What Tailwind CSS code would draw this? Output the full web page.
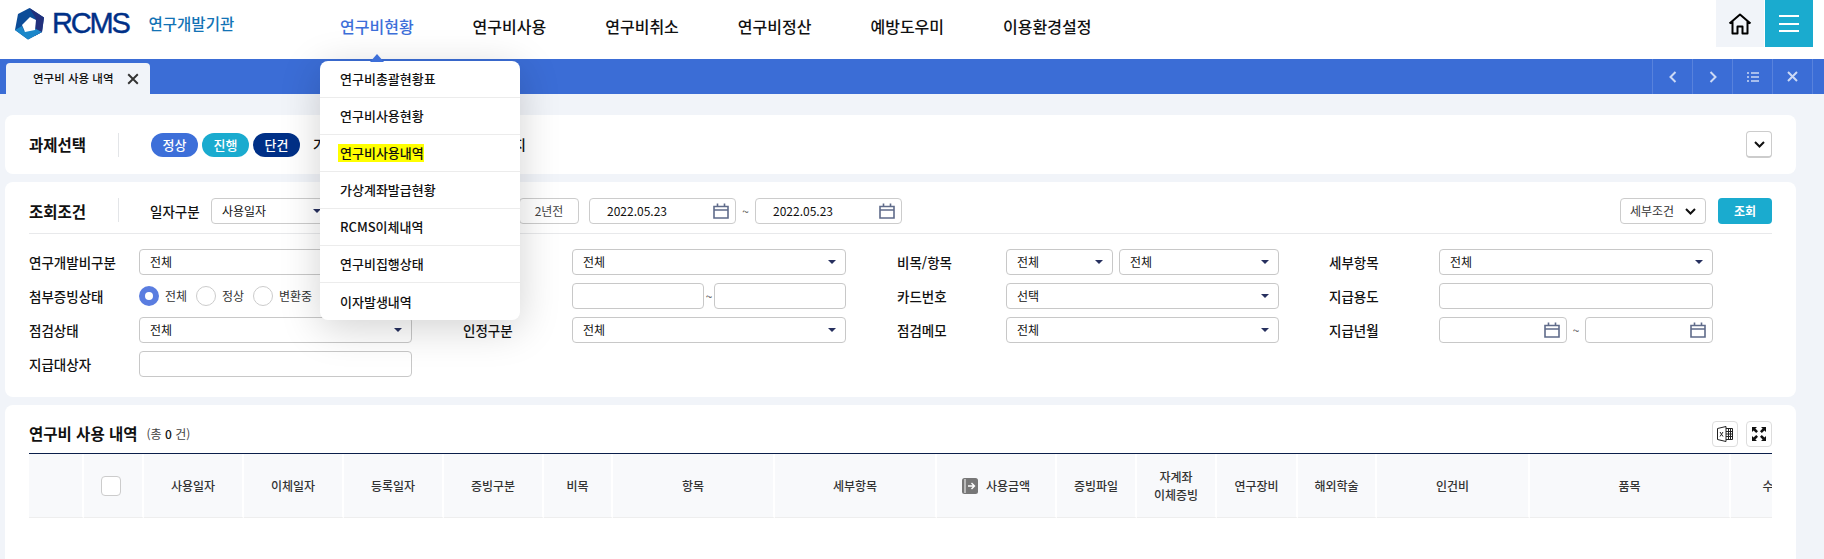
<!DOCTYPE html>
<html lang="ko">
<head>
  <meta charset="UTF-8" />
  <title>RCMS 연구비 사용 내역</title>
  <script src="https://cdn.jsdelivr.net/npm/@tailwindcss/browser@4"></script>
</head>
<body class="relative h-screen overflow-hidden bg-[#f1f4f9] font-['Noto_Sans_CJK_KR','Noto_Sans',sans-serif] text-[#111]">

  <!-- Header -->
  <header class="flex h-[59px] bg-white">
    <div class="flex h-[47px] w-[340px] items-center pl-[15px]">
      <svg class="h-[32px] w-[30px] shrink-0" viewBox="0 0 30 32">
        <path d="M14.5 0 29 9.5 27 24 13 31.5 0 22 3 6Z" fill="#0c4c98"/>
        <path d="M14.5 0 29 9.5 27 24 20 27.8 20.5 10Z" fill="#22307c"/>
        <path d="M0 22 13 31.5 27 24 20 20.5 9 23 7 18Z" fill="#1b87c9"/>
        <path d="M15 9 21 12 20 22 10 24 7 17Z" fill="#fff"/>
      </svg>
      <span class="ml-[7px] font-['Liberation_Sans',sans-serif] text-[29px] leading-none tracking-[-2.2px] text-[#003087] [-webkit-text-stroke:0.4px_#003087]">RCMS</span>
      <span class="ml-[20px] text-[15.5px] font-medium text-[#1273b5]">연구개발기관</span>
    </div>
    <nav class="flex h-[52px] items-center gap-[59px] text-[16px] font-medium">
      <a class="text-[#3d6fd9]">연구비현황</a>
      <a>연구비사용</a>
      <a>연구비취소</a>
      <a>연구비정산</a>
      <a>예방도우미</a>
      <a>이용환경설정</a>
    </nav>
    <div class="ml-auto mr-[11px] flex h-[47px] gap-[1px]">
      <button class="flex w-[48px] items-center justify-center bg-[#f1f4f9]">
        <svg class="h-[22px] w-[24px]" viewBox="0 0 24 22" fill="none" stroke="#000" stroke-width="2" stroke-linejoin="round">
          <path d="M1.5 10.5 12 1.5l10.5 9M4.5 8.5V20.5h5v-7h5v7h5V8.5"/>
        </svg>
      </button>
      <button class="flex w-[48px] flex-col items-center justify-center gap-[5.5px] bg-[#1aabcf]">
        <span class="h-[2px] w-[20px] bg-white"></span>
        <span class="h-[2px] w-[20px] bg-white"></span>
        <span class="h-[2px] w-[20px] bg-white"></span>
      </button>
    </div>
  </header>

  <!-- Tab bar -->
  <div class="flex h-[35px] items-end justify-between bg-[#3b6dd6] pl-[6px] pr-[11px]">
    <div class="flex h-[31px] w-[144px] items-center rounded-t-[4px] bg-[#f1f4f9] pl-[27px] text-[11.5px] font-medium">
      연구비 사용 내역
      <svg class="ml-[13px] h-[12px] w-[12px]" viewBox="0 0 10 10" stroke="#333" stroke-width="1.6"><path d="M1 1l8 8M9 1l-8 8"/></svg>
    </div>
    <div class="flex h-[35px] border-l border-white/15">
      <button class="flex w-[40px] items-center justify-center border-r border-white/15">
        <svg class="h-[12px] w-[8px]" viewBox="0 0 8 12" fill="none" stroke="#ccd9f5" stroke-width="2"><path d="M6.5 1 1.5 6l5 5"/></svg>
      </button>
      <button class="flex w-[40px] items-center justify-center border-r border-white/15">
        <svg class="h-[12px] w-[8px]" viewBox="0 0 8 12" fill="none" stroke="#ccd9f5" stroke-width="2"><path d="M1.5 1l5 5-5 5"/></svg>
      </button>
      <button class="flex w-[40px] items-center justify-center border-r border-white/15">
        <svg class="h-[10px] w-[12px]" viewBox="0 0 12 10" stroke="#ccd9f5" stroke-width="1.6"><path d="M0 1h2M4 1h8M0 5h2M4 5h8M0 9h2M4 9h8"/></svg>
      </button>
      <button class="flex w-[40px] items-center justify-center border-r border-white/15">
        <svg class="h-[11px] w-[11px]" viewBox="0 0 11 11" stroke="#ccd9f5" stroke-width="2"><path d="M1 1l9 9M10 1l-9 9"/></svg>
      </button>
    </div>
  </div>

  <main class="ml-[5px] mr-[28px] flex flex-col gap-[8px] pt-[21px]">

    <!-- 과제선택 -->
    <section class="flex h-[59px] items-center rounded-[8px] bg-white px-[24px]">
      <h2 class="w-[89px] text-[15.5px] font-bold">과제선택</h2>
      <span class="h-[24px] w-[1px] bg-[#e3e5e8]"></span>
      <div class="ml-[32px] flex gap-[4px] text-[13px] font-medium text-white">
        <span class="flex h-[24px] w-[47px] items-center justify-center rounded-full bg-[#3d6fd9]">정상</span>
        <span class="flex h-[24px] w-[47px] items-center justify-center rounded-full bg-[#1aabcf]">진행</span>
        <span class="flex h-[24px] w-[47px] items-center justify-center rounded-full bg-[#003087]">단건</span>
      </div>
      <div class="ml-[13px] flex w-[213px] justify-between text-[14px] font-medium"><span>가</span><span>지</span></div>
      <button class="ml-auto flex h-[27px] w-[26px] items-center justify-center rounded-[4px] border border-[#ccc] border-b-2">
        <svg class="h-[7px] w-[11px]" viewBox="0 0 11 7" fill="none" stroke="#111" stroke-width="2"><path d="M1 1l4.5 4.5L10 1"/></svg>
      </button>
    </section>

    <!-- 조회조건 -->
    <section class="h-[215px] rounded-[8px] bg-white px-[24px] pt-[16px]">
      <div class="flex h-[36px] items-start border-b border-[#e8e9eb]">
        <h2 class="w-[89px] text-[15.5px] font-bold leading-[26px]">조회조건</h2>
        <span class="h-[24px] w-[1px] bg-[#e3e5e8]"></span>
        <span class="ml-[31px] w-[61px] text-[13.5px] font-medium leading-[26px]">일자구분</span>
        <div class="flex h-[26px] w-[120px] items-center justify-between rounded-[4px] border border-[#ccc] pl-[10px] pr-[9px] text-[12px]">
          사용일자
          <svg class="h-[4px] w-[8px]" viewBox="0 0 8 4" fill="#27305f"><path d="M0 0h8L4 4Z"/></svg>
        </div>
        <button class="ml-[188px] h-[26px] w-[60px] rounded-[4px] border border-[#ccc] text-[12px] text-[#444]">2년전</button>
        <div class="ml-[10px] flex h-[26px] w-[147px] items-center justify-between rounded-[4px] border border-[#ccc] pl-[17px] pr-[6px] text-[12px]">
          2022.05.23
          <svg class="h-[16px] w-[16px]" viewBox="0 0 16 16" fill="none" stroke="#5f6b8a" stroke-width="1.6"><path d="M1 3.5h14v11.5H1ZM1 7h14M4.5 0.5v3M11.5 0.5v3"/></svg>
        </div>
        <span class="w-[19px] text-center text-[12px] leading-[26px] text-[#555]">~</span>
        <div class="flex h-[26px] w-[147px] items-center justify-between rounded-[4px] border border-[#ccc] pl-[17px] pr-[6px] text-[12px]">
          2022.05.23
          <svg class="h-[16px] w-[16px]" viewBox="0 0 16 16" fill="none" stroke="#5f6b8a" stroke-width="1.6"><path d="M1 3.5h14v11.5H1ZM1 7h14M4.5 0.5v3M11.5 0.5v3"/></svg>
        </div>
        <button class="ml-auto flex h-[26px] w-[86px] items-center justify-center gap-[11px] rounded-[4px] border border-[#ccc] text-[12px] text-[#333]">
          세부조건
          <svg class="h-[7px] w-[11px]" viewBox="0 0 11 7" fill="none" stroke="#111" stroke-width="2"><path d="M1 1l4.5 4.5L10 1"/></svg>
        </button>
        <button class="ml-[12px] h-[26px] w-[54px] rounded-[4px] bg-[#1aabcf] text-[12px] font-bold text-white">조회</button>
      </div>

      <div class="mt-[15px] grid grid-cols-[110px_273px_160px_274px_160px_273px_160px_274px] items-center gap-y-[8px] text-[13.5px] font-medium">
        <!-- row 1 -->
        <span>연구개발비구분</span>
        <div class="flex h-[26px] items-center justify-between rounded-[4px] border border-[#c8c8c8] pl-[10px] pr-[9px] text-[12px] font-normal">전체<svg class="h-[4px] w-[8px]" viewBox="0 0 8 4" fill="#27305f"><path d="M0 0h8L4 4Z"/></svg></div>
        <span class="pl-[51px]">사용구분</span>
        <div class="flex h-[26px] items-center justify-between rounded-[4px] border border-[#c8c8c8] pl-[10px] pr-[9px] text-[12px] font-normal">전체<svg class="h-[4px] w-[8px]" viewBox="0 0 8 4" fill="#27305f"><path d="M0 0h8L4 4Z"/></svg></div>
        <span class="pl-[51px]">비목/항목</span>
        <div class="flex gap-[6px] text-[12px] font-normal">
          <div class="flex h-[26px] w-[107px] items-center justify-between rounded-[4px] border border-[#c8c8c8] pl-[10px] pr-[9px]">전체<svg class="h-[4px] w-[8px]" viewBox="0 0 8 4" fill="#27305f"><path d="M0 0h8L4 4Z"/></svg></div>
          <div class="flex h-[26px] w-[160px] items-center justify-between rounded-[4px] border border-[#c8c8c8] pl-[10px] pr-[9px]">전체<svg class="h-[4px] w-[8px]" viewBox="0 0 8 4" fill="#27305f"><path d="M0 0h8L4 4Z"/></svg></div>
        </div>
        <span class="pl-[50px]">세부항목</span>
        <div class="flex h-[26px] items-center justify-between rounded-[4px] border border-[#c8c8c8] pl-[10px] pr-[9px] text-[12px] font-normal">전체<svg class="h-[4px] w-[8px]" viewBox="0 0 8 4" fill="#27305f"><path d="M0 0h8L4 4Z"/></svg></div>

        <!-- row 2 -->
        <span>첨부증빙상태</span>
        <div class="flex h-[26px] items-center text-[12px] font-normal text-[#333]">
          <span class="flex h-[20px] w-[20px] items-center justify-center rounded-full bg-[#5a7de0]"><span class="h-[8px] w-[8px] rounded-full bg-white"></span></span>
          <span class="ml-[6px] w-[31px]">전체</span>
          <span class="h-[20px] w-[20px] rounded-full border border-[#ccc]"></span>
          <span class="ml-[6px] w-[31px]">정상</span>
          <span class="h-[20px] w-[20px] rounded-full border border-[#ccc]"></span>
          <span class="ml-[6px]">변환중</span>
        </div>
        <span class="pl-[51px]">사용금액</span>
        <div class="flex items-center">
          <div class="h-[26px] w-[132px] rounded-[4px] border border-[#c8c8c8]"></div>
          <span class="w-[10px] text-center text-[12px] font-normal text-[#555]">~</span>
          <div class="h-[26px] w-[132px] rounded-[4px] border border-[#c8c8c8]"></div>
        </div>
        <span class="pl-[51px]">카드번호</span>
        <div class="flex h-[26px] items-center justify-between rounded-[4px] border border-[#c8c8c8] pl-[10px] pr-[9px] text-[12px] font-normal">선택<svg class="h-[4px] w-[8px]" viewBox="0 0 8 4" fill="#27305f"><path d="M0 0h8L4 4Z"/></svg></div>
        <span class="pl-[50px]">지급용도</span>
        <div class="h-[26px] rounded-[4px] border border-[#c8c8c8]"></div>

        <!-- row 3 -->
        <span>점검상태</span>
        <div class="flex h-[26px] items-center justify-between rounded-[4px] border border-[#c8c8c8] pl-[10px] pr-[9px] text-[12px] font-normal">전체<svg class="h-[4px] w-[8px]" viewBox="0 0 8 4" fill="#27305f"><path d="M0 0h8L4 4Z"/></svg></div>
        <span class="pl-[51px]">인정구분</span>
        <div class="flex h-[26px] items-center justify-between rounded-[4px] border border-[#c8c8c8] pl-[10px] pr-[9px] text-[12px] font-normal">전체<svg class="h-[4px] w-[8px]" viewBox="0 0 8 4" fill="#27305f"><path d="M0 0h8L4 4Z"/></svg></div>
        <span class="pl-[51px]">점검메모</span>
        <div class="flex h-[26px] items-center justify-between rounded-[4px] border border-[#c8c8c8] pl-[10px] pr-[9px] text-[12px] font-normal">전체<svg class="h-[4px] w-[8px]" viewBox="0 0 8 4" fill="#27305f"><path d="M0 0h8L4 4Z"/></svg></div>
        <span class="pl-[50px]">지급년월</span>
        <div class="flex items-center">
          <div class="flex h-[26px] w-[128px] items-center justify-end rounded-[4px] border border-[#c8c8c8] pr-[6px]"><svg class="h-[16px] w-[16px]" viewBox="0 0 16 16" fill="none" stroke="#5f6b8a" stroke-width="1.6"><path d="M1 3.5h14v11.5H1ZM1 7h14M4.5 0.5v3M11.5 0.5v3"/></svg></div>
          <span class="w-[18px] text-center text-[12px] font-normal text-[#555]">~</span>
          <div class="flex h-[26px] w-[128px] items-center justify-end rounded-[4px] border border-[#c8c8c8] pr-[6px]"><svg class="h-[16px] w-[16px]" viewBox="0 0 16 16" fill="none" stroke="#5f6b8a" stroke-width="1.6"><path d="M1 3.5h14v11.5H1ZM1 7h14M4.5 0.5v3M11.5 0.5v3"/></svg></div>
        </div>

        <!-- row 4 -->
        <span>지급대상자</span>
        <div class="h-[26px] rounded-[4px] border border-[#c8c8c8]"></div>
      </div>
    </section>

    <!-- 연구비 사용 내역 -->
    <section class="h-[160px] rounded-t-[8px] bg-white px-[24px] pt-[16px]">
      <div class="flex h-[26px] items-center">
        <h2 class="text-[15.5px] font-bold">연구비 사용 내역</h2>
        <span class="ml-[9px] text-[12px] text-[#444]">(총 <b class="font-medium text-[#111]">0</b> 건)</span>
        <button class="ml-auto flex h-[26px] w-[26px] items-center justify-center rounded-[4px] border border-[#ddd]">
          <svg class="h-[18px] w-[18px]" viewBox="0 0 18 18" fill="none" stroke="#222" stroke-width="1"><path d="M1.5 3.5 10 1.5v15l-8.5-2ZM10 3.5h6.5v11H10M12.5 3.5v11M14.5 3.5v11M10 6.5h6.5M10 9h6.5M10 11.5h6.5"/><path d="M4 7l3 4.5M7 7l-3 4.5"/></svg>
        </button>
        <button class="ml-[8px] flex h-[26px] w-[26px] items-center justify-center rounded-[4px] border border-[#ddd]">
          <svg class="h-[14px] w-[14px]" viewBox="0 0 14 14" fill="#111"><path d="M0 0h5L3.4 1.6 6 4.2 4.2 6 1.6 3.4 0 5ZM14 0v5L12.4 3.4 9.8 6 8 4.2 10.6 1.6 9 0ZM0 14V9l1.6 1.6L4.2 8 6 9.8 3.4 12.4 5 14ZM14 14H9l1.6-1.6L8 9.8 9.8 8l2.6 2.6L14 9Z"/></svg>
        </button>
      </div>
      <div class="mt-[6px] flex h-[65px] overflow-hidden border-t-[1.5px] border-[#0b1f4b] text-[12px] font-medium text-[#333]">
        <div class="flex h-[64px] w-[55px] shrink-0 items-center justify-center border-r-2 border-b border-white border-b-[#eee] bg-[#f8f9fb]"></div>
        <div class="flex h-[64px] w-[60px] shrink-0 items-center justify-center border-r-2 border-b border-white border-b-[#eee] bg-[#f8f9fb] pr-[4px]"><span class="h-[20px] w-[20px] rounded-[4px] border border-[#ccc] bg-white"></span></div>
        <div class="flex h-[64px] w-[100px] shrink-0 items-center justify-center border-r-2 border-b border-white border-b-[#eee] bg-[#f8f9fb]">사용일자</div>
        <div class="flex h-[64px] w-[100px] shrink-0 items-center justify-center border-r-2 border-b border-white border-b-[#eee] bg-[#f8f9fb]">이체일자</div>
        <div class="flex h-[64px] w-[100px] shrink-0 items-center justify-center border-r-2 border-b border-white border-b-[#eee] bg-[#f8f9fb]">등록일자</div>
        <div class="flex h-[64px] w-[100px] shrink-0 items-center justify-center border-r-2 border-b border-white border-b-[#eee] bg-[#f8f9fb]">증빙구분</div>
        <div class="flex h-[64px] w-[69px] shrink-0 items-center justify-center border-r-2 border-b border-white border-b-[#eee] bg-[#f8f9fb]">비목</div>
        <div class="flex h-[64px] w-[162px] shrink-0 items-center justify-center border-r-2 border-b border-white border-b-[#eee] bg-[#f8f9fb]">항목</div>
        <div class="flex h-[64px] w-[162px] shrink-0 items-center justify-center border-r-2 border-b border-white border-b-[#eee] bg-[#f8f9fb]">세부항목</div>
        <div class="flex h-[64px] w-[120px] shrink-0 items-center justify-center gap-[8px] border-r-2 border-b border-white border-b-[#eee] bg-[#f8f9fb]">
          <svg class="h-[16px] w-[16px]" viewBox="0 0 16 16"><rect width="16" height="16" rx="2.5" fill="#777"/><path d="M3 1v14" stroke="#fff" stroke-width="1"/><path d="M6 8h6M9.5 5l3 3-3 3" fill="none" stroke="#fff" stroke-width="1.4"/></svg>
          사용금액
        </div>
        <div class="flex h-[64px] w-[80px] shrink-0 items-center justify-center border-r-2 border-b border-white border-b-[#eee] bg-[#f8f9fb]">증빙파일</div>
        <div class="flex h-[64px] w-[80px] shrink-0 items-center justify-center border-r-2 border-b border-white border-b-[#eee] bg-[#f8f9fb] text-center leading-[18px]">자계좌<br />이체증빙</div>
        <div class="flex h-[64px] w-[81px] shrink-0 items-center justify-center border-r-2 border-b border-white border-b-[#eee] bg-[#f8f9fb]">연구장비</div>
        <div class="flex h-[64px] w-[79px] shrink-0 items-center justify-center border-r-2 border-b border-white border-b-[#eee] bg-[#f8f9fb]">해외학술</div>
        <div class="flex h-[64px] w-[153px] shrink-0 items-center justify-center border-r-2 border-b border-white border-b-[#eee] bg-[#f8f9fb]">인건비</div>
        <div class="flex h-[64px] w-[201px] shrink-0 items-center justify-center border-r-2 border-b border-white border-b-[#eee] bg-[#f8f9fb]">품목</div>
        <div class="flex h-[64px] w-[85px] shrink-0 items-center justify-center border-b border-b-[#eee] bg-[#f8f9fb]">수량</div>
      </div>
    </section>
  </main>

  <!-- Dropdown menu over the page -->
  <div class="absolute left-[320px] top-[61px] w-[200px] rounded-[8px] bg-white text-[13px] font-medium shadow-[0_8px_40px_rgba(0,0,0,0.18)]">
    <span class="absolute left-[50px] top-[-7px] h-0 w-0 border-x-[7px] border-b-[8px] border-x-transparent border-b-[#3d6fd9]"></span>
    <ul class="divide-y divide-[#ececec]">
      <li class="flex h-[37px] items-center pl-[20px]">연구비총괄현황표</li>
      <li class="flex h-[37px] items-center pl-[20px]">연구비사용현황</li>
      <li class="flex h-[37px] items-center pl-[20px]"><span class="-ml-[2px] bg-[#ffff00] pl-[2px] leading-[18px]">연구비사용내역</span></li>
      <li class="flex h-[37px] items-center pl-[20px]">가상계좌발급현황</li>
      <li class="flex h-[37px] items-center pl-[20px]">RCMS이체내역</li>
      <li class="flex h-[37px] items-center pl-[20px]">연구비집행상태</li>
      <li class="flex h-[37px] items-center pl-[20px]">이자발생내역</li>
    </ul>
  </div>

</body>
</html>
